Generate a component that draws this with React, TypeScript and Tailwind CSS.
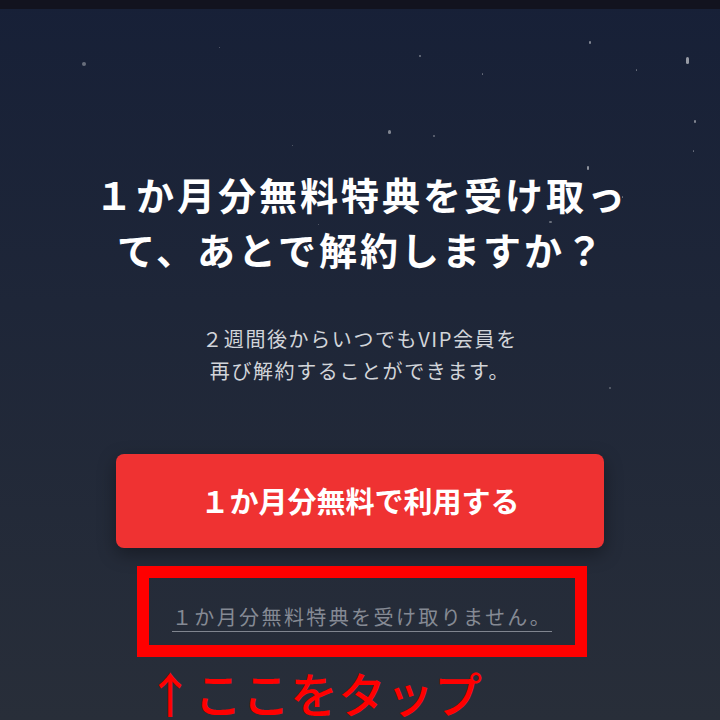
const font = { fontFamily: '"Noto Sans CJK JP", "Noto Sans", sans-serif' };

type Star = {
  x: number;
  y: number;
  w: number;
  h: number;
  o: number;
};

const stars: Star[] = [
  { x: 82, y: 62, w: 4, h: 4, o: 0.35 },
  { x: 219, y: 47, w: 1, h: 1, o: 0.3 },
  { x: 292, y: 145, w: 1, h: 1, o: 0.3 },
  { x: 388, y: 130, w: 3, h: 4, o: 0.45 },
  { x: 419, y: 55, w: 2, h: 2, o: 0.4 },
  { x: 433, y: 135, w: 2, h: 2, o: 0.35 },
  { x: 482, y: 73, w: 1, h: 2, o: 0.35 },
  { x: 589, y: 41, w: 2, h: 3, o: 0.45 },
  { x: 587, y: 166, w: 2, h: 4, o: 0.5 },
  { x: 622, y: 196, w: 1, h: 2, o: 0.35 },
  { x: 636, y: 69, w: 1, h: 2, o: 0.35 },
  { x: 686, y: 57, w: 3, h: 7, o: 0.55 },
  { x: 694, y: 120, w: 2, h: 3, o: 0.45 },
  { x: 693, y: 150, w: 1, h: 2, o: 0.35 },
  { x: 549, y: 221, w: 3, h: 2, o: 0.35 },
  { x: 609, y: 387, w: 2, h: 2, o: 0.3 },
  { x: 318, y: 224, w: 1, h: 1, o: 0.3 },
];

export default function App() {
  return (
    <div
      className="relative h-[720px] overflow-hidden bg-gradient-to-b from-[#172037] to-[#282e39]"
      style={font}
    >
      <div className="h-[9px] bg-[#12131f]" />

      {stars.map((star, index) => (
        <span
          key={index}
          className="absolute rounded-full bg-white"
          style={{
            left: star.x,
            top: star.y,
            width: star.w,
            height: star.h,
            opacity: star.o,
          }}
        />
      ))}

      <main className="relative flex flex-col items-center pt-[157px]">
        <h1 className="pl-[3px] text-center text-[38px] font-bold leading-[55px] tracking-[3px] text-white">
          １か月分無料特典を受け取っ
          <br />
          て、あとで解約しますか？
        </h1>

        <p className="mt-[47px] text-center text-[20px] leading-[32px] tracking-[1.6px] text-[#d2d5da]">
          ２週間後からいつでもVIP会員を
          <br />
          再び解約することができます。
        </p>

        <button className="mt-[67px] h-[94px] w-[488px] rounded-lg bg-[#ef3232] text-[29px] font-bold text-white shadow-[0_6px_18px_rgba(0,0,0,0.35)]">
          １か月分無料で利用する
        </button>

        <div className="ml-1 mt-[18px] flex h-[91px] w-[450px] justify-center border-[12px] border-[#ff0000] pt-[25px]">
          <span className="h-[29px] border-b border-[#80858f] text-[20px] leading-[28px] tracking-[2.4px] text-[#858a94]">
            １か月分無料特典を受け取りません。
          </span>
        </div>

        <div className="ml-[146px] mt-[11px] self-start text-[48px] font-medium leading-[48px] text-[#ff0000]">
          ↑ここをタップ
        </div>
      </main>
    </div>
  );
}
